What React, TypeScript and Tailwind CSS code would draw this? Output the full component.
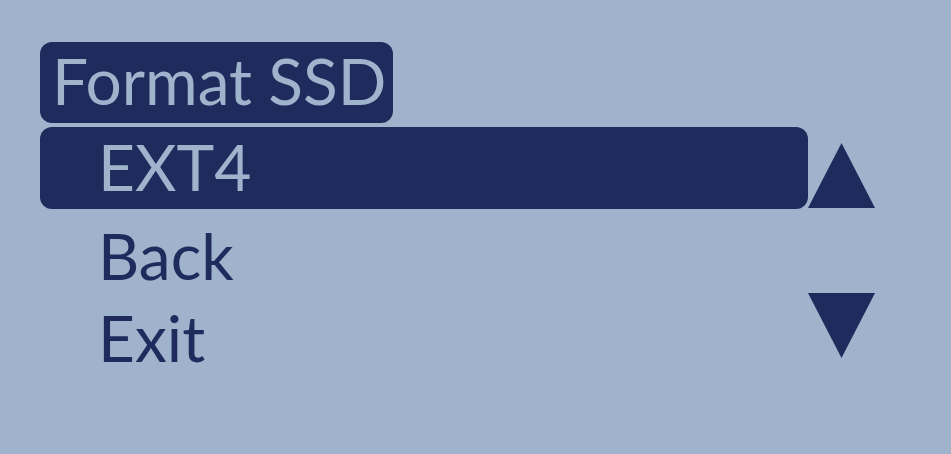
const menuItems = [
  { label: "EXT4", selected: true },
  { label: "Back", selected: false },
  { label: "Exit", selected: false },
];

function Arrow({ dir }: { dir: "up" | "down" }) {
  return (
    <svg width="67" height="65" viewBox="0 0 67 65" className="block">
      {dir === "up" ? (
        <polygon points="33.5,0 67,65 0,65" fill="#1e2b5c" />
      ) : (
        <polygon points="0,0 67,0 33.5,65" fill="#1e2b5c" />
      )}
    </svg>
  );
}

export default function App() {
  return (
    <div
      className="w-[951px] h-[454px] bg-[#9fb4cc] text-[#1e2b5c] overflow-hidden"
      style={{ fontFamily: "Lato, 'Open Sans', sans-serif" }}
    >
      <div className="flex pl-[40px] pt-[42px]">
        <div className="w-[768px] flex flex-col">
          {/* screen title */}
          <div className="self-start h-[81px] rounded-[12px] bg-[#1e2b5c] text-[#9fb4cc] pl-[12px] pr-[7px] text-[64px] leading-[77px]">
            Format SSD
          </div>

          {/* menu entries */}
          <div className="flex flex-col mt-[4px]">
            {menuItems.map((item) => (
              <div
                key={item.label}
                className={`h-[82px] pl-[58px] text-[64px] leading-[79px] ${
                  item.selected
                    ? "h-[79px] mb-[7px] rounded-[12px] bg-[#1e2b5c] text-[#9fb4cc]"
                    : ""
                }`}
              >
                {item.label}
              </div>
            ))}
          </div>
        </div>

        {/* scroll indicators */}
        <div className="w-[67px] flex flex-col pt-[101px] gap-[85px]">
          <Arrow dir="up" />
          <Arrow dir="down" />
        </div>
      </div>
    </div>
  );
}
